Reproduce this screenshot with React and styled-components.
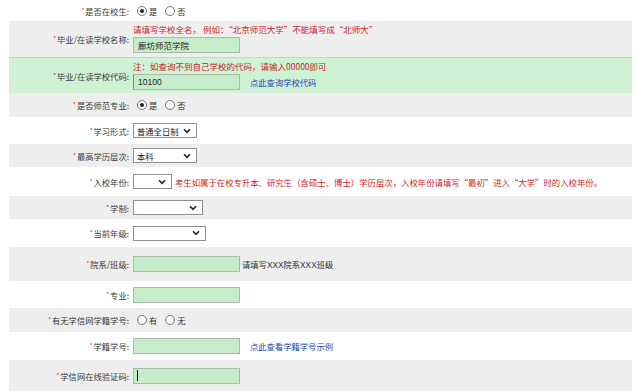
import React from 'react';
import styled, { createGlobalStyle } from 'styled-components';

const GlobalStyle = createGlobalStyle`
  body {
    margin: 0;
    background: #fff;
    font-family: "Noto Sans CJK SC", "Liberation Sans", sans-serif;
  }
`;

const Page = styled.div`
  width: 637px;
  height: 391px;
  overflow: hidden;
  padding-left: 9px;
  box-sizing: border-box;
`;

const Table = styled.div`
  width: 623px;
  display: flex;
  flex-direction: column;
`;

const toneBg = {
  white: '#ffffff',
  gray: '#eeeeee',
  green: '#cff2d5',
};

const Row = styled.div`
  display: grid;
  grid-template-columns: 124px 1fr;
  height: ${(p) => p.h}px;
  box-sizing: border-box;
  background: ${(p) => toneBg[p.tone]};
  border-top: ${(p) => (p.tone === 'green' ? '1px solid #aed9df' : 'none')};
`;

const Label = styled.div`
  display: flex;
  align-items: center;
  justify-content: flex-end;
  padding-right: 4px;
  font-size: 8.3px;
  color: #3a3a3a;
  white-space: nowrap;
`;

const Star = styled.span`
  color: #d42a2a;
  font-size: 6px;
  position: relative;
  top: -2px;
  margin-right: 1px;
`;

const Value = styled.div`
  display: flex;
  flex-direction: ${(p) => (p.stack ? 'column' : 'row')};
  align-items: ${(p) => (p.stack ? 'flex-start' : 'center')};
  padding-top: ${(p) => (p.stack ? '2px' : '0')};
  font-size: 8.3px;
  color: #333;
  white-space: nowrap;
`;

const Line = styled.div`
  display: flex;
  align-items: center;
`;

const Hint = styled.div`
  height: 12px;
  line-height: 12px;
  margin-bottom: 2px;
  color: #d02424;
  font-size: 8.5px;
  font-family: "Noto Sans CJK SC", sans-serif;
`;

const Field = styled.div`
  width: 107px;
  height: 16px;
  box-sizing: border-box;
  background: #c6edca;
  border: 1px solid #a9b9ab;
  border-left-color: ${(p) => (p.focus ? '#5b8fd6' : '#a9b9ab')};
  display: flex;
  align-items: center;
  padding-left: 4px;
  font-family: "Liberation Sans", "Noto Sans CJK SC", sans-serif;
  font-size: 8.5px;
  color: #222;
`;

const Caret = styled.span`
  display: block;
  width: 1px;
  height: 11px;
  margin-left: -1px;
  background: #111;
`;

const Note = styled.span`
  margin-left: ${(p) => p.gap}px;
  color: ${(p) => (p.red ? '#d02424' : '#333')};
  font-family: ${(p) =>
    p.red
      ? '"Noto Sans CJK SC", sans-serif'
      : '"Liberation Sans", "Noto Sans CJK SC", sans-serif'};
  font-size: ${(p) => (p.red ? '8.4px' : '8.3px')};
`;

const LinkText = styled.span`
  margin-left: 10px;
  color: #2347b8;
`;

const SelectBox = styled.div`
  width: ${(p) => p.w}px;
  height: 15px;
  box-sizing: border-box;
  border: 1px solid #8f8f8f;
  background: #fff;
  display: flex;
  align-items: center;
  justify-content: space-between;
  padding: 0 5px 0 3px;
  font-size: 8.3px;
  color: #222;
`;

const RadioGroup = styled.div`
  display: flex;
  align-items: center;
  padding-left: 4px;
`;

const RadioItem = styled.label`
  display: flex;
  align-items: center;
  margin-right: 8px;
  color: #333;
`;

const Dot = styled.span`
  width: 8px;
  height: 8px;
  border: 1px solid #777;
  border-radius: 50%;
  background: #fff;
  margin-right: 2px;
  display: flex;
  align-items: center;
  justify-content: center;

  &::after {
    content: '';
    width: 4px;
    height: 4px;
    border-radius: 50%;
    background: ${(p) => (p.checked ? '#222' : 'transparent')};
  }
`;

function Chevron() {
  return (
    <svg width="8" height="6" viewBox="0 0 8 6">
      <path d="M1 1.2 L4 4.4 L7 1.2" fill="none" stroke="#222" strokeWidth="1.6" />
    </svg>
  );
}

function Radios({ items, checked }) {
  return (
    <RadioGroup>
      {items.map((t, i) => (
        <RadioItem key={t}>
          <Dot checked={i === checked} />
          {t}
        </RadioItem>
      ))}
    </RadioGroup>
  );
}

function Select({ w, text }) {
  return (
    <SelectBox w={w}>
      <span>{text}</span>
      <Chevron />
    </SelectBox>
  );
}

function FormRow({ tone, h, label, stack, children }) {
  return (
    <Row tone={tone} h={h}>
      <Label>
        <span>
          <Star>*</Star>
          {label}:
        </span>
      </Label>
      <Value stack={stack}>{children}</Value>
    </Row>
  );
}

export default function App() {
  return (
    <Page>
      <GlobalStyle />
      <Table>
        <FormRow tone="white" h={21} label="是否在校生">
          <Radios items={['是', '否']} checked={0} />
        </FormRow>
        <FormRow tone="gray" h={36} label="毕业/在读学校名称" stack>
          <Hint>请填写学校全名， 例如：“北京师范大学”不能填写成“北师大”</Hint>
          <Field>廊坊师范学院</Field>
        </FormRow>
        <FormRow tone="green" h={36} label="毕业/在读学校代码" stack>
          <Hint>注：如查询不到自己学校的代码，请输入00000即可</Hint>
          <Line>
            <Field focus>10100</Field>
            <LinkText>点此查询学校代码</LinkText>
          </Line>
        </FormRow>
        <FormRow tone="gray" h={24} label="是否师范专业">
          <Radios items={['是', '否']} checked={0} />
        </FormRow>
        <FormRow tone="white" h={27} label="学习形式">
          <Select w={64} text="普通全日制" />
        </FormRow>
        <FormRow tone="gray" h={23} label="最高学历层次">
          <Select w={64} text="本科" />
        </FormRow>
        <FormRow tone="white" h={29} label="入校年份">
          <Select w={39} text="" />
          <Note red gap={3}>
            考生如属于在校专升本、研究生（含硕士、博士）学历层次，入校年份请填写“最初”进入“大学”时的入校年份。
          </Note>
        </FormRow>
        <FormRow tone="gray" h={23} label="学制">
          <Select w={70} text="" />
        </FormRow>
        <FormRow tone="white" h={28} label="当前年级">
          <Select w={73} text="" />
        </FormRow>
        <FormRow tone="gray" h={34} label="院系/班级">
          <Field />
          <Note gap={2}>请填写XXX院系XXX班级</Note>
        </FormRow>
        <FormRow tone="white" h={27} label="专业">
          <Field />
        </FormRow>
        <FormRow tone="gray" h={24} label="有无学信网学籍学号">
          <Radios items={['有', '无']} checked={-1} />
        </FormRow>
        <FormRow tone="white" h={28} label="学籍学号">
          <Field />
          <LinkText>点此查看学籍学号示例</LinkText>
        </FormRow>
        <FormRow tone="gray" h={31} label="学信网在线验证码">
          <Field>
            <Caret />
          </Field>
        </FormRow>
      </Table>
    </Page>
  );
}
